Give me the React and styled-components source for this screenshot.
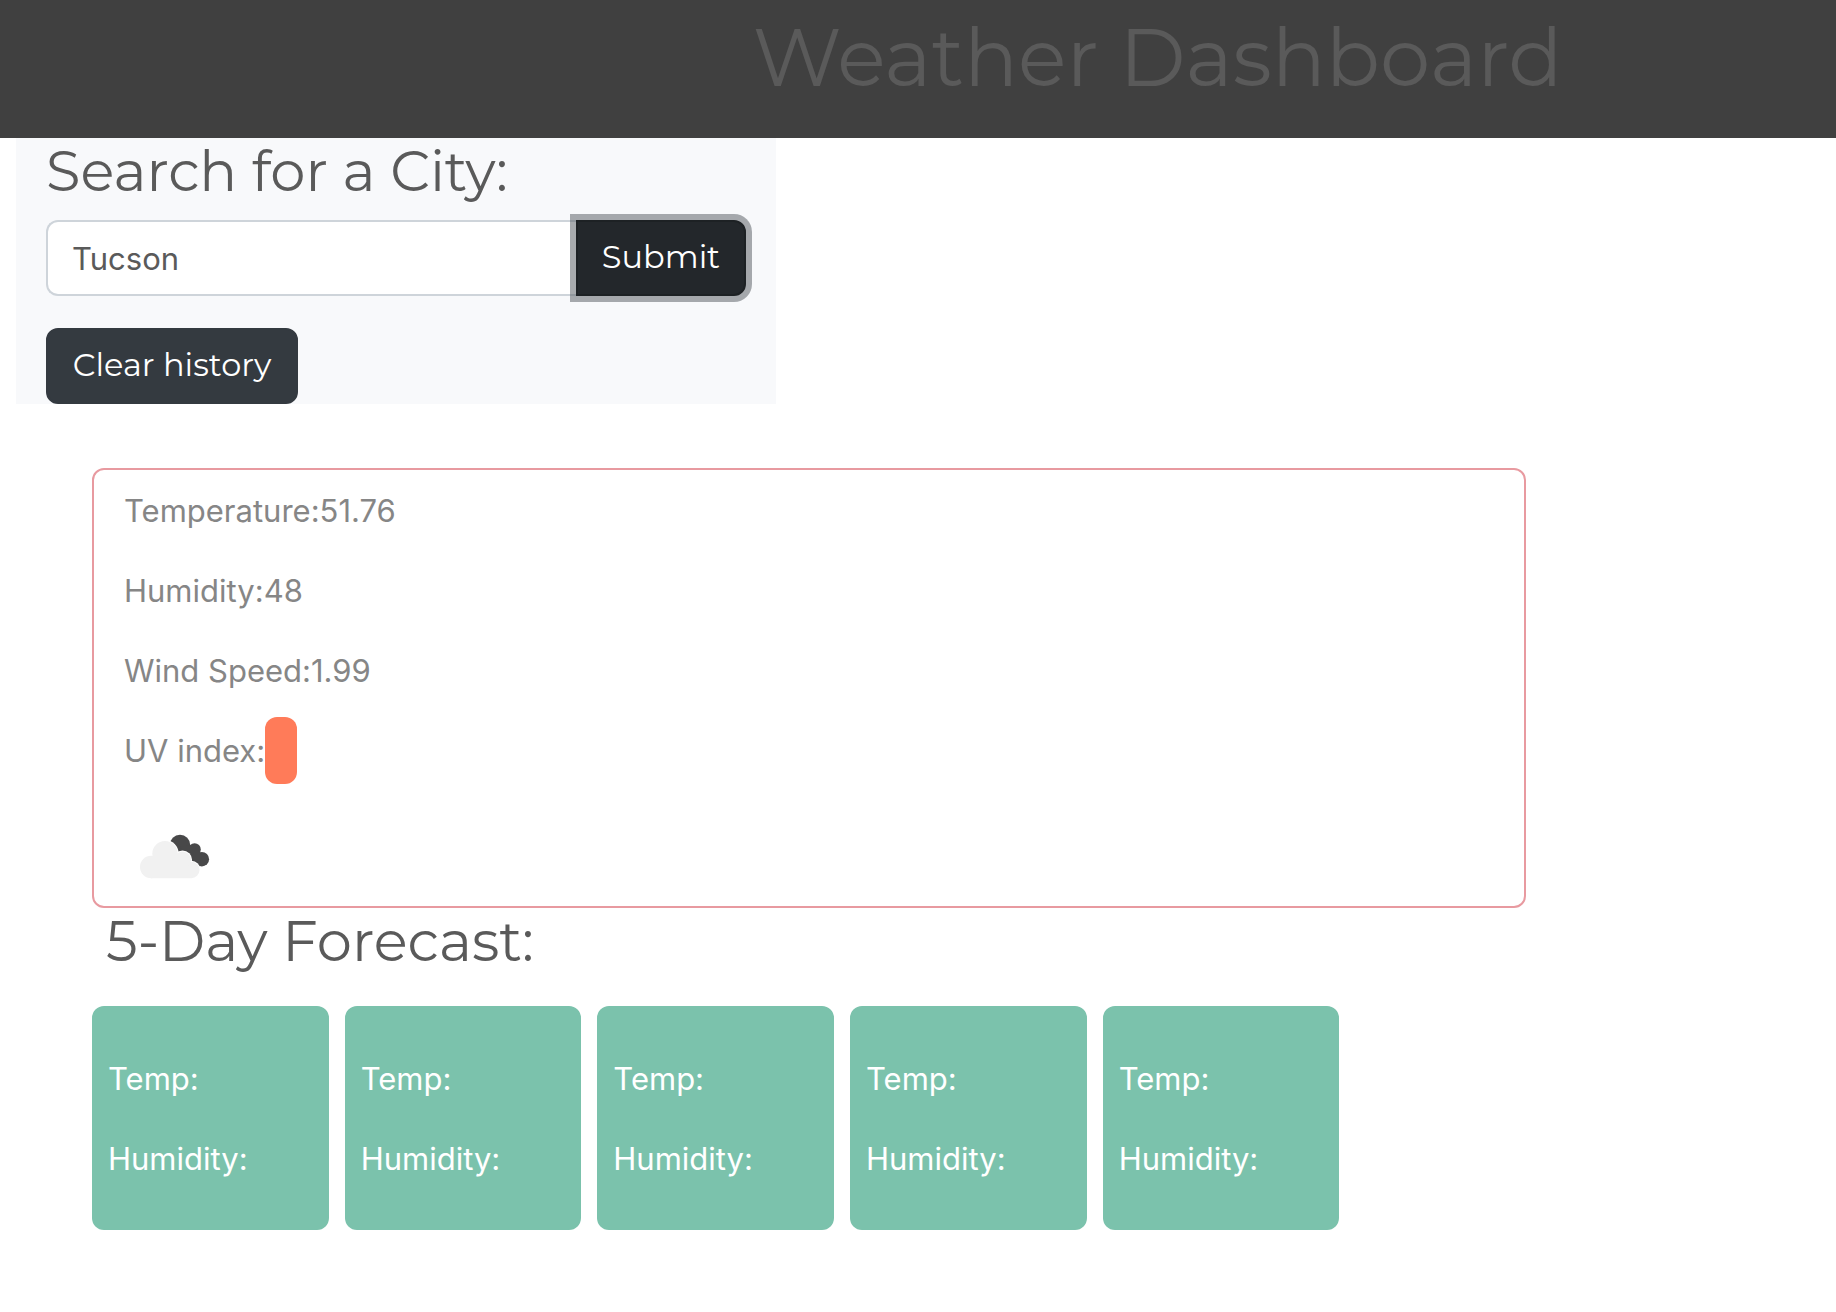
import React, { useState } from "react";
import styled, { createGlobalStyle } from "styled-components";

const heading = `Montserrat, "DejaVu Sans", sans-serif`;
const body = `Inter, Roboto, sans-serif`;

const GlobalStyle = createGlobalStyle`
  *, *::before, *::after { box-sizing: border-box; }
  body {
    margin: 0;
    background: #fff;
    color: #5a5a5a;
    font: 400 31px/48px ${body};
  }
`;

const Header = styled.header`
  padding: 10px 16px 32px 41%;
  background: #404040;
`;

const Title = styled.h1`
  margin: 0;
  font: 400 80px/96px ${heading};
  white-space: nowrap;
`;

const Heading = styled.h2`
  margin: 0;
  font: 400 56px/66px ${heading};
`;

const SearchPanel = styled.section`
  display: flex;
  flex-direction: column;
  align-items: flex-start;
  width: 760px;
  max-width: calc(100% - 32px);
  margin-left: 16px;
  padding: 0 30px;
  background: #f8f9fb;
`;

const SearchForm = styled.form`
  display: flex;
  align-self: stretch;
  margin: 16px 0 32px;
`;

const CityInput = styled.input`
  flex: 1;
  min-width: 0;
  height: 76px;
  padding: 0 24px;
  border: 2px solid #ced4da;
  border-right: 0;
  border-radius: 12px 0 0 12px;
  background: #fff;
  color: #5a5a5a;
  font: 400 31px/48px ${body};
  outline: 0;
`;

const Button = styled.button`
  height: 76px;
  padding: 0 24px 2px;
  border: 2px solid #343a40;
  border-radius: 12px;
  background: #343a40;
  color: #fff;
  font: 400 32px/48px ${heading};
  cursor: pointer;
`;

const SubmitButton = styled(Button)`
  position: relative;
  min-width: 170px;
  border-color: #1d2124;
  border-radius: 0 12px 12px 0;
  background: #23272b;
  box-shadow: 0 0 0 6px rgba(82, 88, 93, 0.5);
`;

const ClearButton = styled(Button)`
  min-width: 252px;
`;

const Results = styled.main`
  width: 83.1%;
  padding: 64px 0 0 92px;
`;

const CurrentCard = styled.section`
  padding: 17px 30px 0;
  border: 2px solid #e89aa0;
  border-radius: 12px;
  color: #868686;
`;

const Reading = styled.p`
  margin: 0 0 32px;
`;

const UvBadge = styled.span`
  padding: 15px 16px;
  border-radius: 12px;
  background: #ff7b59;
`;

const WeatherIcon = styled.svg`
  display: block;
  width: 99px;
  height: 99px;
`;

const ForecastHeading = styled(Heading)`
  margin: 0 14px 32px;
`;

const ForecastRow = styled.div`
  display: grid;
  grid-template-columns: repeat(5, 1fr);
  gap: 16px;
  width: 87%;
`;

const DayCard = styled.article`
  padding: 49px 16px 15px;
  border-radius: 12px;
  background: #7bc2ac;
  color: #fff;
`;

const readings = [
  ["Temperature", "51.76"],
  ["Humidity", "48"],
  ["Wind Speed", "1.99"],
];

// Centre x, centre y and radius of each puff.
const darkPuffs = [[56, 38, 10.2], [70.6, 42.4, 6.2], [77.8, 52.2, 7.3]];
const lightPuffs = [[27.2, 60, 11.2], [41, 46.8, 12.7], [58.5, 53, 8.6], [67.3, 63, 8.2]];

function BrokenClouds() {
  return (
    <WeatherIcon viewBox="0 0 99 99" role="img" aria-label="Broken clouds">
      <g fill="#484849">
        {darkPuffs.map(([x, y, r]) => <circle key={x} cx={x} cy={y} r={r} />)}
        <path d="M56 40 68 38 78 47 76 59.500 64 52Z" />
      </g>
      <g fill="#fff">
        {lightPuffs.map(([x, y, r]) => <circle key={x} cx={x} cy={y} r={r + 1} />)}
      </g>
      <g fill="#f1f1f1">
        {lightPuffs.map(([x, y, r]) => <circle key={x} cx={x} cy={y} r={r} />)}
        <path d="M27.200 71.200V60L36 50H50L64 56L67.300 71.200Z" />
      </g>
    </WeatherIcon>
  );
}

export default function App() {
  const [city, setCity] = useState("Tucson");
  return (
    <>
      <GlobalStyle />
      <Header>
        <Title>Weather Dashboard</Title>
      </Header>
      <SearchPanel>
        <Heading as="label" htmlFor="city">Search for a City:</Heading>
        <SearchForm onSubmit={(e) => e.preventDefault()}>
          <CityInput id="city" type="text" value={city} onChange={(e) => setCity(e.target.value)} />
          <SubmitButton type="submit">Submit</SubmitButton>
        </SearchForm>
        <ClearButton type="button" onClick={() => setCity("")}>Clear history</ClearButton>
      </SearchPanel>
      <Results>
        <CurrentCard>
          {readings.map(([name, value]) => (
            <Reading key={name}>{name}:{value}</Reading>
          ))}
          <Reading>UV index:<UvBadge /></Reading>
          <BrokenClouds />
        </CurrentCard>
        <ForecastHeading>5-Day Forecast:</ForecastHeading>
        <ForecastRow>
          {[1, 2, 3, 4, 5].map((day) => (
            <DayCard key={day}>
              <Reading>Temp:</Reading>
              <Reading>Humidity:</Reading>
            </DayCard>
          ))}
        </ForecastRow>
      </Results>
    </>
  );
}
